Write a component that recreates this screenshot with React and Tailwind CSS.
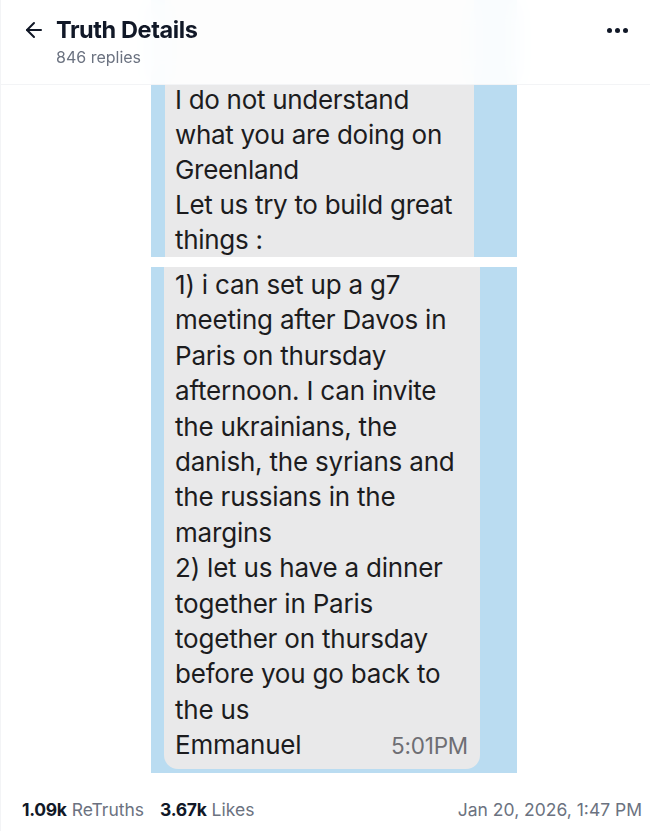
import React from "react";

const img1Lines = [
  "I do not understand",
  "what you are doing on",
  "Greenland",
  "Let us try to build great",
  "things :",
];

const img2Lines = [
  "1) i can set up a g7",
  "meeting after Davos in",
  "Paris on thursday",
  "afternoon. I can invite",
  "the ukrainians, the",
  "danish, the syrians and",
  "the russians in the",
  "margins",
  "2) let us have a dinner",
  "together in Paris",
  "together on thursday",
  "before you go back to",
  "the us",
];

export default function App() {
  return (
    <div className="relative w-[650px] min-h-[831px] bg-white font-['Inter',sans-serif] border-l border-gray-100">
      {/* Header overlaying content */}
      <header className="absolute top-0 left-0 right-0 z-10 h-[85px] bg-white/90 backdrop-blur-md border-b border-gray-100 flex items-start justify-between pl-[21px] pr-[22px] pt-[16px]">
        <div className="flex items-start gap-[10px]">
          <svg width="24" height="24" viewBox="0 0 24 24" fill="none" stroke="#111827" strokeWidth="2" strokeLinecap="round" strokeLinejoin="round" className="mt-[2px]">
            <path d="M19 12H5" />
            <path d="M12 19l-7-7 7-7" />
          </svg>
          <div className="flex flex-col">
            <span className="text-[23.5px] leading-[28px] font-bold text-[#111827] tracking-[-0.4px]">Truth Details</span>
            <span className="text-[16px] leading-[20px] text-[#6b7280] mt-[3px]">846 replies</span>
          </div>
        </div>
        <div className="flex items-center gap-[3px] mt-[12px]">
          <span className="w-[5px] h-[5px] rounded-full bg-[#111827]" />
          <span className="w-[5px] h-[5px] rounded-full bg-[#111827]" />
          <span className="w-[5px] h-[5px] rounded-full bg-[#111827]" />
        </div>
      </header>

      <main className="flex flex-col">
        {/* Image 1 (cropped screenshot) */}
        <div className="ml-[150px] w-[366px] h-[257px] bg-[#badcf1] flex">
          <div className="ml-[14px] w-[309px] h-full bg-[#e9e9ea] flex flex-col justify-end pl-[10px]">
            <div className="text-[26px] leading-[35px] text-[#1c1c1e] tracking-[-0.3px]">
              {img1Lines.map((l, i) => (
                <div key={i} className="whitespace-nowrap">{l}</div>
              ))}
            </div>
          </div>
        </div>

        <div className="h-[10px]" />

        {/* Image 2 */}
        <div className="ml-[150px] w-[366px] h-[506px] bg-[#badcf1] flex">
          <div className="ml-[13px] w-[316px] h-[502px] bg-[#e9e9ea] rounded-b-[14px] flex flex-col pl-[11px] pr-[12px]">
            <div className="text-[26px] leading-[35.4px] text-[#1c1c1e] tracking-[-0.2px]">
              {img2Lines.map((l, i) => (
                <div key={i} className="whitespace-nowrap">{l}</div>
              ))}
              <div className="flex items-baseline justify-between">
                <span>Emmanuel</span>
                <span className="text-[22.5px] text-[#6e6e73] tracking-[-0.2px]">5:01PM</span>
              </div>
            </div>
          </div>
        </div>

        {/* Footer stats */}
        <div className="flex items-center justify-between pl-[21px] pr-[8px] pt-[25px]">
          <div className="flex items-center text-[17.5px] leading-[24px]">
            <span className="font-bold text-[#111827] tracking-[-0.3px]">1.09k</span>
            <span className="ml-[5px] text-[#6b7280]">ReTruths</span>
            <span className="ml-[16px] font-bold text-[#111827] tracking-[-0.3px]">3.67k</span>
            <span className="ml-[5px] text-[#6b7280]">Likes</span>
          </div>
          <span className="text-[17.5px] leading-[24px] text-[#6b7280]">Jan 20, 2026, 1:47 PM</span>
        </div>
      </main>
    </div>
  );
}
